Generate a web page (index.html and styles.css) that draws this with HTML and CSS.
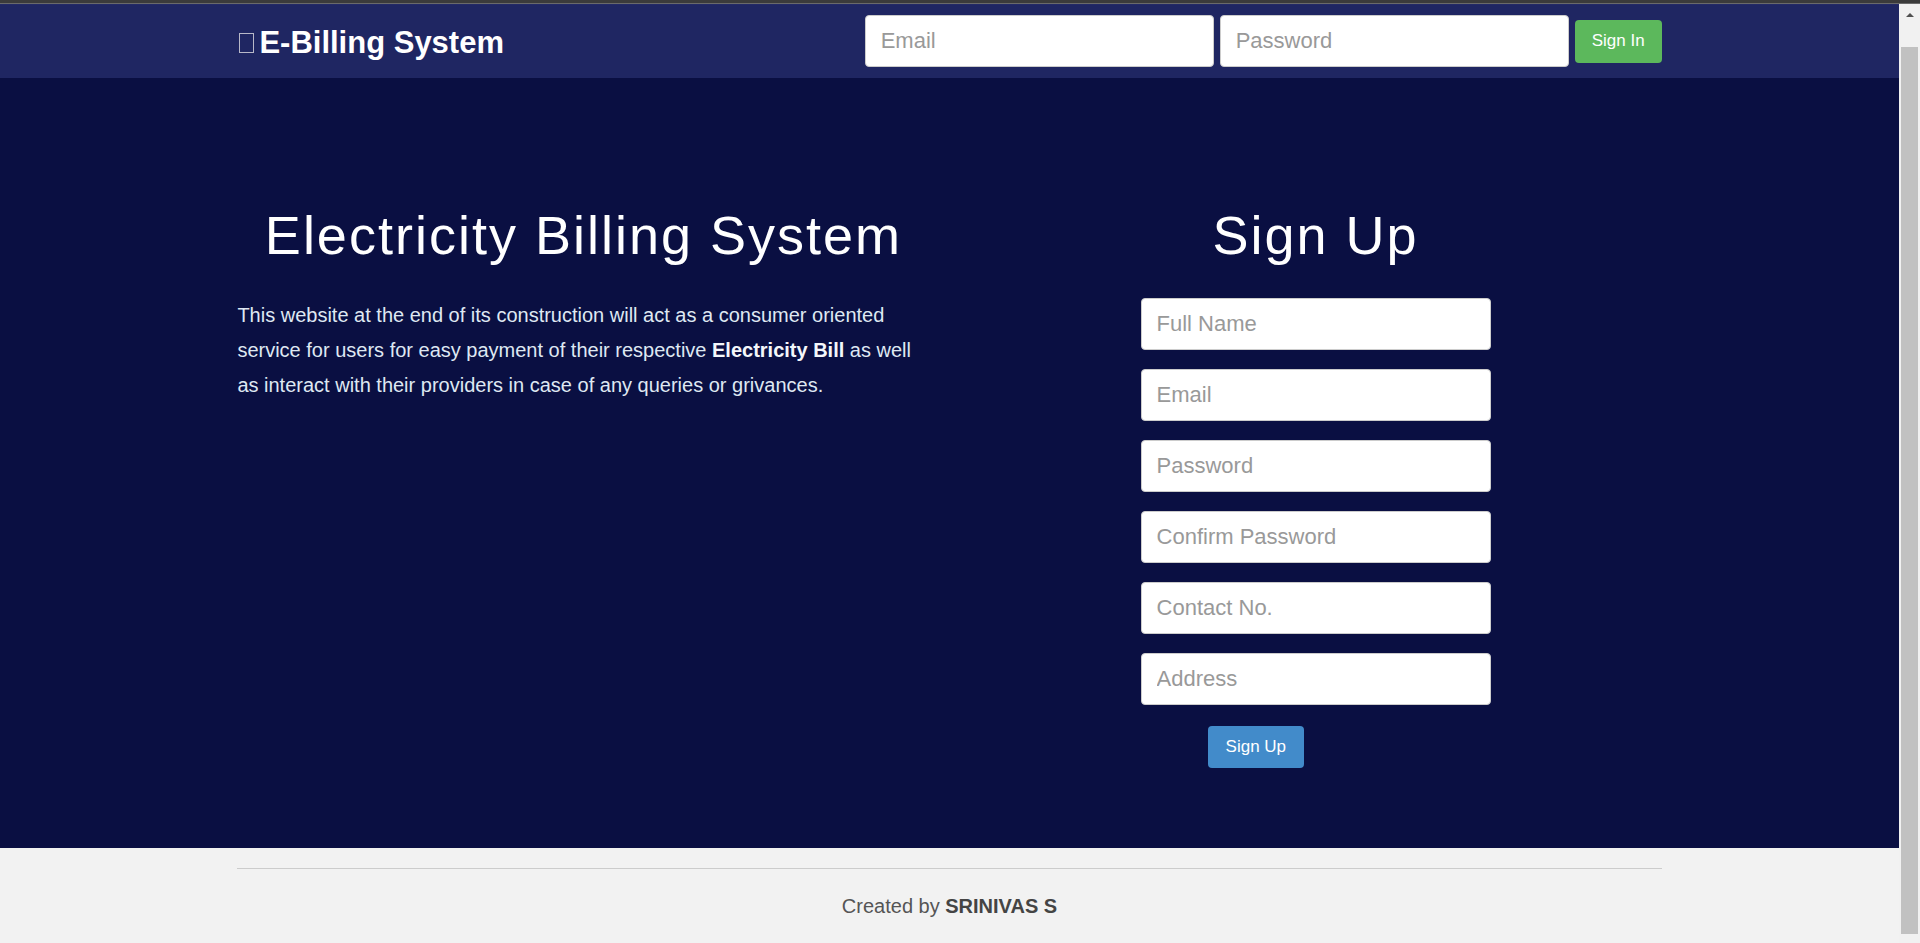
FILE: index.html
```html
<!DOCTYPE html>
<html lang="en">
<head>
    <meta charset="UTF-8">
    <meta name="viewport" content="width=device-width, initial-scale=1.0">
    <title>E-Billing System</title>
    <link rel="stylesheet" href="styles.css">
</head>
<body>

<div class="window">
    <div class="chrome-strip"></div>

    <div class="viewport">
        <div class="page">

            <header class="navbar">
                <div class="container nav-inner">
                    <a class="brand" href="#"><span class="missing-icon"></span>E-Billing System</a>

                    <form class="signin-form">
                        <input type="email" class="field" placeholder="Email">
                        <input type="password" class="field" placeholder="Password">
                        <button type="button" class="btn btn-green">Sign In</button>
                    </form>
                </div>
            </header>

            <main class="hero">
                <div class="container hero-grid">
                    <div class="intro">
                        <h1>Electricity Billing System</h1>
                        <p>This website at the end of its construction will act as a consumer oriented
                        service for users for easy payment of their respective <b>Electricity Bill</b> as well
                        as interact with their providers in case of any queries or grivances.</p>
                    </div>

                    <div class="signup">
                        <h1>Sign Up</h1>
                        <form class="signup-form">
                            <input type="text" class="field" placeholder="Full Name">
                            <input type="email" class="field" placeholder="Email">
                            <input type="password" class="field" placeholder="Password">
                            <input type="password" class="field" placeholder="Confirm Password">
                            <input type="text" class="field" placeholder="Contact No.">
                            <input type="text" class="field" placeholder="Address">
                            <div class="form-actions">
                                <button type="button" class="btn btn-blue">Sign Up</button>
                            </div>
                        </form>
                    </div>
                </div>
            </main>

            <footer class="footer">
                <div class="container">
                    <hr>
                    <p>Created by <b>SRINIVAS S</b></p>
                </div>
            </footer>

        </div>

        <div class="scrollbar">
            <div class="scroll-arrow"></div>
            <div class="scroll-thumb"></div>
        </div>
    </div>
</div>

</body>
</html>
```

FILE: styles.css
```css
html, body {
    margin: 0;
    height: 100%;
    overflow: hidden;
}

body {
    font-family: "Liberation Sans", Arial, sans-serif;
    background: #f2f2f2;
}

.window {
    height: 100vh;
    display: flex;
    flex-direction: column;
}

.chrome-strip {
    height: 4px;
    background: #3b3b3b;
    border-bottom: 1px solid #6a6a6a;
    box-sizing: border-box;
}

.viewport {
    flex: 1;
    display: flex;
    min-height: 0;
}

.page {
    flex: 1;
    overflow: hidden;
    background: #f2f2f2;
}

.container {
    width: 75%;
    margin: 0 auto;
}

/* top bar */
.navbar {
    background: #1f2662;
    height: 74px;
    border-top: 1px solid #232a66;
    box-sizing: border-box;
}

.nav-inner {
    height: 100%;
    display: flex;
    align-items: center;
    justify-content: space-between;
}

.brand {
    display: inline-flex;
    align-items: center;
    color: #fff;
    font-weight: bold;
    font-size: 31px;
    text-decoration: none;
    margin-top: 2px;
}

.missing-icon {
    width: 13px;
    height: 18px;
    border: 1px solid #b8b8c8;
    margin: 0 5px 0 2px;
}

.signin-form {
    display: flex;
    align-items: center;
    gap: 6px;
    margin-top: -1px;
}

.signin-form .field {
    width: 349px;
}

.field {
    height: 52px;
    box-sizing: border-box;
    padding: 0 15px;
    font-family: "Liberation Sans", Arial, sans-serif;
    font-size: 22px;
    color: #333;
    background: #fff;
    border: 1px solid #ccc;
    border-radius: 4px;
    outline: none;
}

.field::placeholder {
    color: #999;
}

.btn {
    height: 43px;
    padding: 0 17px;
    font-family: "Liberation Sans", Arial, sans-serif;
    font-size: 17px;
    color: #fff;
    border: none;
    border-radius: 4px;
    cursor: pointer;
}

.btn-green {
    background: #5cb85c;
}

.btn-blue {
    height: 42px;
    padding: 0 18px;
    background: #428bca;
}

/* main section */
.hero {
    background: #0a0f42;
    padding: 127px 0 80px;
}

.hero-grid {
    display: grid;
    grid-template-columns: 1fr 1fr;
    column-gap: 40px;
}

.hero h1 {
    margin: 0 0 33px;
    color: #fff;
    font-weight: normal;
    font-size: 54px;
    line-height: 60px;
    letter-spacing: 2px;
    text-align: center;
}

.intro p {
    margin: 0;
    color: #dfe8f2;
    font-size: 20px;
    line-height: 35px;
}

.intro b {
    color: #f4f7fb;
}

.signup-form {
    width: 350px;
    margin: 0 auto;
    display: flex;
    flex-direction: column;
    gap: 19px;
}

.form-actions {
    margin-top: 2px;
    padding-left: 67px;
}

/* footer */
.footer {
    padding-top: 20px;
    height: 200px;
}

.footer hr {
    margin: 0;
    border: none;
    border-top: 1px solid #ccc;
}

.footer p {
    margin: 23px 0 0;
    text-align: center;
    font-size: 20px;
    line-height: 28px;
    color: #555;
}

.footer b {
    color: #444;
}

/* scrollbar look */
.scrollbar {
    width: 21px;
    background: #f1f1f1;
    display: flex;
    flex-direction: column;
    align-items: center;
}

.scroll-arrow {
    margin-top: 9px;
    width: 0;
    height: 0;
    border-left: 4px solid transparent;
    border-right: 4px solid transparent;
    border-bottom: 4px solid #505050;
}

.scroll-thumb {
    margin-top: 30px;
    width: 17px;
    height: 887px;
    background: #c1c1c1;
}
```
